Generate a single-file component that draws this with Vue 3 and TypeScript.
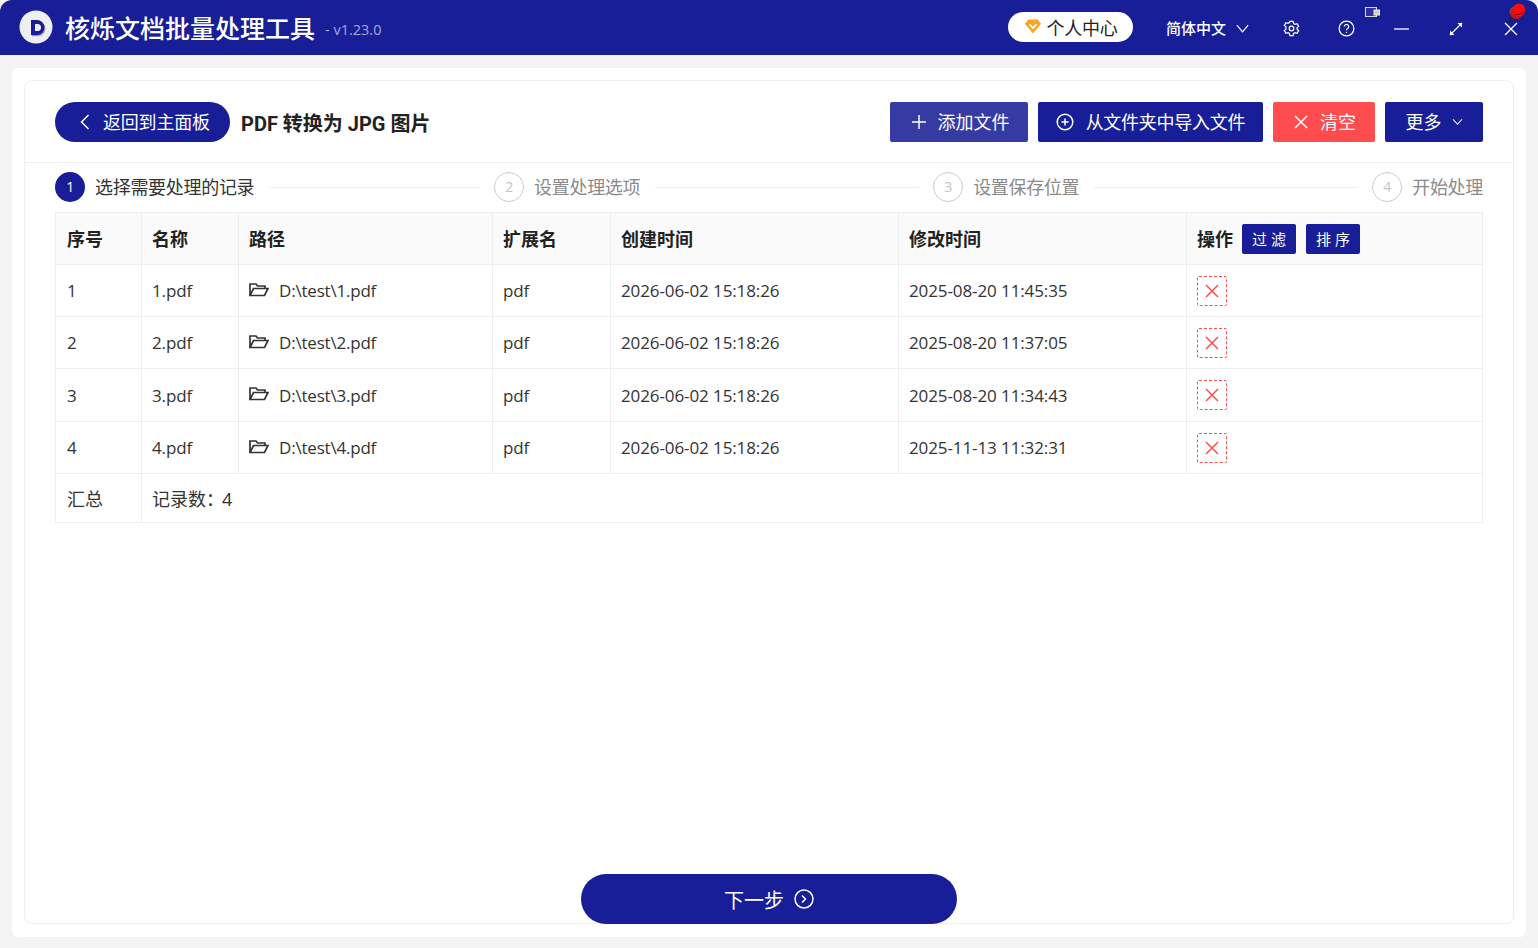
<template>
  <div class="app">
    <header class="titlebar">
      <div class="brand">
        <svg class="logo" viewBox="0 0 34 34">
          <circle cx="17" cy="17" r="16.5" fill="#eeeef3" />
          <path d="M12 10h6a7.500 7.500 0 0 1 0 15h-6z" fill="#9a98ad" transform="translate(0.800 1.200)" />
          <path d="M12 10h6a7.500 7.500 0 0 1 0 15h-6z" fill="#181e97" />
          <path d="M16 14h2.500a3.500 3.500 0 0 1 0 7H16z" fill="#eeeef3" />
        </svg>
        <span class="app-name">核烁文档批量处理工具</span>
        <span class="version">- v1.23.0</span>
      </div>
      <div class="bar-right">
        <button class="user-pill">
          <svg class="gem" viewBox="0 0 16 14">
            <path d="M3.500 0.500h9l3 4-7.500 9-7.500-9z" fill="#f6a623" />
            <path d="M4.800 5l3.200 3.400 3.200-3.400" fill="none" stroke="#fff" stroke-width="1.500" />
          </svg>
          个人中心
        </button>
        <span class="lang">简体中文</span>
        <svg class="bar-icon lang-caret" viewBox="0 0 16 16"><path d="M2 4.500l6 7 6-7" /></svg>
        <svg class="bar-icon gear" viewBox="0 0 18 18">
          <path d="M7.300 1.500h3.400l.5 2.200 1.500.9 2.200-.7 1.700 2.900-1.700 1.500v1.400l1.700 1.500-1.700 2.900-2.200-.7-1.500.9-.5 2.200H7.300l-.5-2.200-1.500-.9-2.200.7-1.700-2.900 1.700-1.500V7.300L1.400 5.800l1.700-2.900 2.200.7 1.500-.9z" />
          <circle cx="9" cy="9" r="2.400" />
        </svg>
        <svg class="bar-icon help" viewBox="0 0 18 18">
          <circle cx="9" cy="9" r="7.800" />
          <path d="M6.700 7a2.300 2.300 0 1 1 3.500 2c-.8.500-1.200.9-1.200 1.900" />
          <path d="M9 12.500v1.200" />
        </svg>
        <svg class="bar-icon minimize" viewBox="0 0 15 2"><path d="M0 1h15" /></svg>
        <svg class="bar-icon expand" viewBox="0 0 14 14">
          <path d="M1 13L13 1" />
          <path d="M8.500 1H13v4.500M1 8.500V13h4.500" fill="#fff" stroke="none" />
        </svg>
        <svg class="bar-icon close" viewBox="0 0 14 14"><path d="M1 1l12 12M13 1L1 13" /></svg>
      </div>
      <svg class="tray-icon" viewBox="0 0 15 12">
        <rect x="0.500" y="0.500" width="11" height="9" fill="#2a3199" stroke="#d5d5e0" />
        <rect x="9" y="3" width="5.500" height="5" fill="#ccc" stroke="#eee" />
      </svg>
      <svg class="pin-icon" viewBox="0 0 20 22">
        <path d="M1 20.500l5-5.500" stroke="#222" stroke-width="1.800" />
        <circle cx="8" cy="10" r="5.500" fill="#8a4a4a" />
        <circle cx="9.500" cy="11" r="6" fill="#c81414" />
        <circle cx="12" cy="8" r="6.500" fill="#f80c0c" />
        <path d="M8 12.500c3.500.5 7-.5 9.500-3.500" fill="none" stroke="#7c1010" stroke-width="1" />
      </svg>
    </header>

    <main class="shell">
      <section class="panel">
        <div class="toolbar">
          <button class="back-btn">
            <svg class="stroke-icon back-arrow" viewBox="0 0 10 16"><path d="M8.500 1L1.500 8l7 7" /></svg>
            返回到主面板
          </button>
          <h1 class="page-title">PDF 转换为 JPG 图片</h1>
          <div class="actions">
            <button class="btn btn-add">
              <svg class="stroke-icon" viewBox="0 0 14 14"><path d="M7 0v14M0 7h14" /></svg>
              添加文件
            </button>
            <button class="btn btn-import">
              <svg class="stroke-icon circle-plus" viewBox="0 0 18 18">
                <circle cx="9" cy="9" r="7.800" />
                <path d="M9 5.500v7M5.500 9h7" />
              </svg>
              从文件夹中导入文件
            </button>
            <button class="btn btn-clear">
              <svg class="stroke-icon" viewBox="0 0 14 14"><path d="M1 1l12 12M13 1L1 13" /></svg>
              清空
            </button>
            <button class="btn btn-more">
              更多
              <svg class="stroke-icon more-caret" viewBox="0 0 12 8"><path d="M1 1l5 5.500L11 1" /></svg>
            </button>
          </div>
        </div>

        <ol class="steps">
          <li v-for="(step, i) in steps" :key="step" class="step" :class="{ active: i === 0 }">
            <span class="step-num">{{ i + 1 }}</span>
            <span class="step-label">{{ step }}</span>
            <span v-if="i < steps.length - 1" class="step-line" />
          </li>
        </ol>

        <div class="table-wrap">
          <table class="records">
            <colgroup>
              <col v-for="w in colWidths" :key="w.id" :style="{ width: w.px + 'px' }" />
              <col />
            </colgroup>
            <thead>
              <tr>
                <th>序号</th>
                <th>名称</th>
                <th>路径</th>
                <th>扩展名</th>
                <th>创建时间</th>
                <th>修改时间</th>
                <th>
                  <div class="op-head">
                    操作
                    <button class="mini-btn">过 滤</button>
                    <button class="mini-btn">排 序</button>
                  </div>
                </th>
              </tr>
            </thead>
            <tbody>
              <tr v-for="row in rows" :key="row.id" class="data-row">
                <td>{{ row.id }}</td>
                <td>{{ row.id }}.pdf</td>
                <td>
                  <div class="path-cell">
                    <svg class="folder" viewBox="0 0 20 14">
                      <path d="M1 12.500V1h6l1.500 2H16v2.500" />
                      <path d="M1 12.500L4.500 5.500H19l-3.500 7z" />
                    </svg>
                    D:\test\{{ row.id }}.pdf
                  </div>
                </td>
                <td>pdf</td>
                <td>{{ row.created }}</td>
                <td>{{ row.modified }}</td>
                <td>
                  <button class="del-btn">
                    <svg viewBox="0 0 14 14"><path d="M1 1l12 12M13 1L1 13" /></svg>
                  </button>
                </td>
              </tr>
              <tr class="summary">
                <td>汇总</td>
                <td colspan="6">记录数：<span class="count">4</span></td>
              </tr>
            </tbody>
          </table>
        </div>

        <div class="footer">
          <button class="next-btn">
            下一步
            <svg class="stroke-icon next-icon" viewBox="0 0 20 20">
              <circle cx="10" cy="10" r="9" />
              <path d="M8 6.500l3.500 3.500L8 13.500" />
            </svg>
          </button>
        </div>
      </section>
    </main>
  </div>
</template>

<script setup lang="ts">
const steps = ['选择需要处理的记录', '设置处理选项', '设置保存位置', '开始处理']

const colWidths = [
  { id: 'no', px: 86 },
  { id: 'name', px: 97 },
  { id: 'path', px: 254 },
  { id: 'ext', px: 118 },
  { id: 'created', px: 288 },
  { id: 'modified', px: 288 },
]

const rows = [
  { id: 1, created: '2026-06-02 15:18:26', modified: '2025-08-20 11:45:35' },
  { id: 2, created: '2026-06-02 15:18:26', modified: '2025-08-20 11:37:05' },
  { id: 3, created: '2026-06-02 15:18:26', modified: '2025-08-20 11:34:43' },
  { id: 4, created: '2026-06-02 15:18:26', modified: '2025-11-13 11:32:31' },
]
</script>

<style>
html,
body {
  margin: 0;
  height: 100%;
  overflow: hidden;
  background: #f4f4f4;
}
</style>

<style scoped>
.app {
  height: 948px;
  display: flex;
  flex-direction: column;
  font-family: "Open Sans", "Noto Sans CJK SC", sans-serif;
  color: #333;
  font-size: 18px;
}

button {
  font-family: inherit;
  border: none;
  cursor: pointer;
}

.titlebar {
  position: relative;
  flex: none;
  height: 55px;
  background: #181e97;
  border-radius: 12px 12px 0 0;
  display: flex;
  align-items: center;
  justify-content: space-between;
  color: #fff;
}

.brand {
  display: flex;
  align-items: center;
  padding-left: 19px;
}

.logo {
  width: 34px;
  height: 34px;
  margin-bottom: 1px;
}

.app-name {
  margin-left: 12px;
  margin-top: 1px;
  font-size: 25px;
  font-weight: 500;
  line-height: 34px;
}

.version {
  margin-left: 10px;
  margin-top: 3px;
  font-size: 14.500px;
  color: #a5a8d6;
}

.bar-right {
  display: flex;
  align-items: center;
  margin-top: 2px;
}

.user-pill {
  width: 125px;
  height: 30px;
  margin-right: 33px;
  margin-bottom: 4px;
  border-radius: 15px;
  background: #fff;
  color: #222;
  font-size: 18px;
  display: flex;
  align-items: center;
  justify-content: center;
  gap: 5px;
  padding: 0;
  letter-spacing: -0.300px;
}

.gem {
  width: 18px;
  height: 15px;
}

.lang {
  font-size: 15px;
  font-weight: 500;
  margin-bottom: 2px;
}

.bar-icon {
  fill: none;
  stroke: #fff;
  stroke-width: 1.300;
  flex: none;
}

.lang-caret {
  width: 15px;
  height: 15px;
  margin-left: 9px;
}

.gear {
  width: 17px;
  height: 17px;
  margin-left: 33px;
}

.help {
  width: 17px;
  height: 17px;
  margin-left: 38px;
}

.minimize {
  width: 15px;
  height: 2px;
  margin-left: 39px;
}

.expand {
  width: 14px;
  height: 14px;
  margin-left: 40px;
}

.close {
  width: 14px;
  height: 14px;
  margin-left: 41px;
  margin-right: 20px;
}

.tray-icon {
  position: absolute;
  left: 1365px;
  top: 7px;
  width: 15px;
  height: 12px;
}

.pin-icon {
  position: absolute;
  left: 1507px;
  top: 2px;
  width: 20px;
  height: 22px;
}

.shell {
  flex: 1;
  min-height: 0;
  display: flex;
  padding: 13px 12px 11px;
}

.panel {
  flex: 1;
  min-width: 0;
  display: flex;
  flex-direction: column;
  background: #fff;
  border-radius: 6px;
  padding: 12px 12px 13px;
  box-sizing: border-box;
}

.toolbar,
.steps,
.table-wrap,
.footer {
  border-left: 1px solid #eeeeee;
  border-right: 1px solid #eeeeee;
}

.toolbar {
  flex: none;
  height: 83px;
  box-sizing: border-box;
  display: flex;
  align-items: center;
  padding: 0 30px;
  border-top: 1px solid #eeeeee;
  border-bottom: 1px solid #eeeeee;
  border-radius: 8px 8px 0 0;
}

.back-btn {
  width: 175px;
  height: 40px;
  border-radius: 20px;
  background: #181e97;
  color: #fff;
  font-size: 18px;
  letter-spacing: -0.200px;
  display: flex;
  align-items: center;
  padding: 0 0 2px 25px;
  gap: 13px;
  white-space: nowrap;
}

.stroke-icon {
  fill: none;
  stroke: #fff;
  stroke-width: 1.500;
  width: 14px;
  height: 14px;
  flex: none;
}

.back-arrow {
  width: 10px;
  height: 16px;
  margin-top: 2px;
}

.page-title {
  margin: 2px 0 0 11px;
  font-family: Roboto, "Noto Sans CJK SC", sans-serif;
  font-size: 20px;
  font-weight: 700;
  color: #222;
}

.actions {
  margin-left: auto;
  display: flex;
  gap: 10px;
}

.btn {
  height: 40px;
  border-radius: 2px;
  background: #181e97;
  color: #fff;
  font-size: 18px;
  display: flex;
  align-items: center;
  justify-content: center;
  gap: 12px;
  padding: 0 0 2px;
  white-space: nowrap;
}

.btn svg {
  margin-top: 2px;
}

.btn-add {
  width: 138px;
  padding-left: 3px;
  background: #353ba3;
}

.btn-import {
  width: 225px;
  letter-spacing: -0.250px;
}

.btn-clear {
  width: 102px;
  padding-left: 2px;
  background: #ff4d4f;
}

.btn-more {
  width: 98px;
  gap: 10px;
}

.circle-plus {
  width: 18px;
  height: 18px;
}

.more-caret {
  width: 11px;
  height: 8px;
  stroke-width: 1.200;
}

.steps {
  flex: none;
  list-style: none;
  margin: 0;
  height: 49px;
  box-sizing: border-box;
  padding: 0 30px 2px;
  display: flex;
  align-items: center;
  color: #8a8a8a;
  font-size: 18px;
  letter-spacing: -0.300px;
}

.step {
  flex: 1;
  display: flex;
  align-items: center;
  gap: 10px;
  white-space: nowrap;
}

.step:last-child {
  flex: none;
}

.step.active {
  color: #333;
}

.step-label {
  margin-top: -2px;
}

.step-num {
  width: 28px;
  height: 28px;
  border: 1px solid #ccc;
  border-radius: 50%;
  display: flex;
  align-items: center;
  justify-content: center;
  flex: none;
  font-size: 14px;
  color: #c4c4c4;
}

.active .step-num {
  width: 30px;
  height: 30px;
  border: none;
  background: #181e97;
  color: #fff;
}

.step-line {
  flex: 1;
  height: 1px;
  margin: 1px 14px 0 5px;
  background: #eeeeee;
}

.table-wrap {
  flex: none;
  min-width: 0;
  padding: 0 30px;
}

.records {
  width: 100%;
  table-layout: fixed;
  border-collapse: collapse;
  font-size: 18px;
  color: #333;
}

.records th,
.records td {
  border: 1px solid #eeeeee;
  padding: 0 10px;
  text-align: left;
  box-sizing: border-box;
  white-space: nowrap;
}

.records th:first-child,
.records td:first-child {
  padding-left: 11px;
}

.records th {
  height: 52px;
  padding-bottom: 2px;
  background: #fafafa;
  font-weight: 700;
  color: #222;
}

.data-row td {
  height: 52px;
  font-size: 17px;
  letter-spacing: -0.100px;
}

.data-row:nth-child(3) td {
  height: 53px;
}

.summary td {
  height: 49px;
}

.count {
  margin-left: -2px;
  color: #3a2a2a;
}

.op-head {
  display: flex;
  align-items: center;
}

.mini-btn {
  width: 54px;
  height: 30px;
  margin: 2px 0 0 10px;
  padding: 0;
  border-radius: 2px;
  background: #181e97;
  color: #fff;
  font-size: 15px;
  font-weight: 400;
}

.op-head .mini-btn:first-of-type {
  margin-left: 9px;
}

.path-cell {
  display: flex;
  align-items: center;
  gap: 10px;
  letter-spacing: -0.200px;
}

.folder {
  width: 20px;
  height: 14px;
  margin-top: -2px;
  fill: none;
  stroke: #333;
  stroke-width: 1.700;
  flex: none;
}

.del-btn {
  display: flex;
  align-items: center;
  justify-content: center;
  width: 30px;
  height: 30px;
  padding: 0;
  background: #fff;
  border: 1px dashed #ff4d4f;
  border-radius: 2px;
}

.del-btn svg {
  width: 14px;
  height: 14px;
  fill: none;
  stroke: #ff4d4f;
  stroke-width: 1.500;
}

.footer {
  flex: 1;
  min-height: 0;
  display: flex;
  align-items: flex-end;
  justify-content: center;
  border-bottom: 1px solid #eeeeee;
  border-radius: 0 0 8px 8px;
}

.next-btn {
  width: 376px;
  height: 50px;
  margin-bottom: -1px;
  border-radius: 25px;
  background: #181e97;
  color: #fff;
  font-size: 20px;
  display: flex;
  align-items: center;
  justify-content: center;
  gap: 10px;
  padding: 0;
}

.next-icon {
  width: 20px;
  height: 20px;
}
</style>
